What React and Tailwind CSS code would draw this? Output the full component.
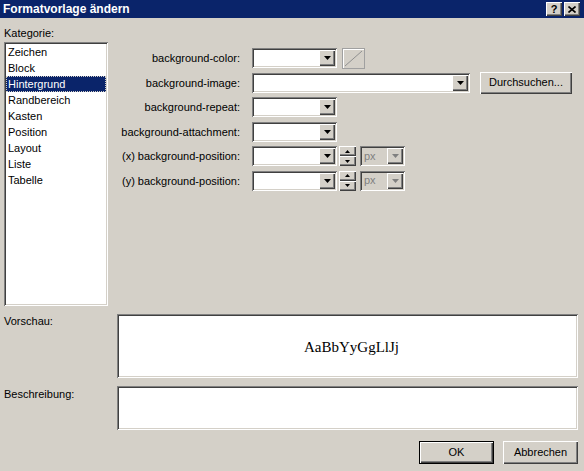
import React from 'react';

const sunken = 'shadow-[inset_1px_1px_0_#808080,inset_-1px_-1px_0_#ffffff,inset_2px_2px_0_#404040,inset_-2px_-2px_0_#d4d0c8]';
const raised = 'shadow-[inset_1px_1px_0_#ffffff,inset_-1px_-1px_0_#404040,inset_-2px_-2px_0_#808080]';

const categories = ['Zeichen', 'Block', 'Hintergrund', 'Randbereich', 'Kasten', 'Position', 'Layout', 'Liste', 'Tabelle'];

function Arrow({ disabled }) {
  return (
    <svg width="7" height="4" viewBox="0 0 7 4">
      <path d="M0 0h7L3.5 4z" fill={disabled ? '#808080' : '#000'} />
    </svg>
  );
}

function Combo({ width, disabled, text }) {
  return (
    <div className={`h-[20px] flex p-[2px] ${width} ${disabled ? 'bg-[#d4d0c8]' : 'bg-white'} ${sunken}`}>
      <div className="flex-1 flex items-center pl-[2px] text-[#808080]">{text}</div>
      <div className={`w-[16px] flex items-center justify-center bg-[#d4d0c8] ${raised}`}>
        <Arrow disabled={disabled} />
      </div>
    </div>
  );
}

function Spin() {
  return (
    <div className="ml-[2px] w-[17px] h-[20px] flex flex-col">
      <div className={`h-[10px] flex items-center justify-center bg-[#d4d0c8] ${raised}`}>
        <svg width="5" height="3" viewBox="0 0 5 3"><path d="M2.5 0L5 3H0z" fill="#000" /></svg>
      </div>
      <div className={`h-[10px] flex items-center justify-center bg-[#d4d0c8] ${raised}`}>
        <svg width="5" height="3" viewBox="0 0 5 3"><path d="M0 0h5L2.5 3z" fill="#000" /></svg>
      </div>
    </div>
  );
}

function Row({ label, children }) {
  return (
    <div className="h-[20px] flex items-center">
      <div className="w-[133px] text-right pr-[1px] pt-[1px] whitespace-nowrap">{label}</div>
      <div className="ml-[11px] flex items-center">{children}</div>
    </div>
  );
}

export default function App() {
  return (
    <div className="w-[584px] h-[471px] bg-[#d4d0c8] font-['Liberation_Sans',Arial,sans-serif] text-[11px] leading-[13px] text-black flex flex-col overflow-hidden">
      {/* Title bar */}
      <div className="h-[18px] bg-[#0a246a] flex items-center justify-between pl-[3px] pr-[4px]">
        <span className="text-white font-bold text-[12px]">Formatvorlage ändern</span>
        <div className="flex gap-[2px]">
          <div className={`w-[16px] h-[14px] bg-[#d4d0c8] flex items-center justify-center font-bold text-[11px] ${raised}`}>?</div>
          <div className={`w-[16px] h-[14px] bg-[#d4d0c8] flex items-center justify-center ${raised}`}>
            <svg width="8" height="7" viewBox="0 0 8 7">
              <path d="M0.5 0.5L7.5 6.5M7.5 0.5L0.5 6.5" stroke="#000" strokeWidth="1.6" />
            </svg>
          </div>
        </div>
      </div>

      <div className="flex-1 flex flex-col pt-[9px] pl-[4px] pr-[6px]">
        {/* Top section */}
        <div className="flex">
          <div className="flex flex-col w-[104px]">
            <div>Kategorie:</div>
            <div className={`mt-[2px] h-[264px] bg-white p-[2px] ${sunken}`}>
              {categories.map((c) => (
                <div
                  key={c}
                  className={`h-[16px] flex items-center pl-[2px] ${c === 'Hintergrund' ? 'bg-[#0a246a] text-white outline-1 outline-dotted outline-[#d4d0c8] -outline-offset-1' : ''}`}
                >
                  {c}
                </div>
              ))}
            </div>
          </div>

          <div className="flex flex-col gap-[4.6px] pt-[21px]">
            <Row label="background-color:">
              <Combo width="w-[85px]" />
              <div className="ml-[5px] w-[23px] h-[21px] border border-[#a0a0a0] bg-[#d4d0c8] shadow-[inset_1px_1px_0_#ffffff]">
                <svg width="21" height="19" viewBox="0 0 21 19">
                  <path d="M2 17L19 2" stroke="#909090" strokeWidth="1" />
                </svg>
              </div>
            </Row>
            <Row label="background-image:">
              <Combo width="w-[218px]" />
              <div className={`ml-[10px] -my-[1px] w-[92px] h-[22px] flex items-center justify-center bg-[#d4d0c8] ${raised}`}>
                Durchsuchen...
              </div>
            </Row>
            <Row label="background-repeat:">
              <Combo width="w-[85px]" />
            </Row>
            <Row label="background-attachment:">
              <Combo width="w-[85px]" />
            </Row>
            <Row label="(x) background-position:">
              <Combo width="w-[85px]" />
              <Spin />
              <div className="ml-[4px]"><Combo width="w-[45px]" disabled text="px" /></div>
            </Row>
            <Row label="(y) background-position:">
              <Combo width="w-[85px]" />
              <Spin />
              <div className="ml-[4px]"><Combo width="w-[45px]" disabled text="px" /></div>
            </Row>
          </div>
        </div>

        {/* Preview */}
        <div className="flex mt-[8px]">
          <div className="w-[113px] pt-[1px]">Vorschau:</div>
          <div className={`flex-1 h-[64px] bg-white flex items-center justify-center ${sunken}`}>
            <span className="font-['Liberation_Serif','Times_New_Roman',serif] text-[15px] leading-[18px] pt-[2px] pl-[8px]">AaBbYyGgLlJj</span>
          </div>
        </div>

        {/* Description */}
        <div className="flex mt-[8px]">
          <div className="w-[113px] pt-[2px]">Beschreibung:</div>
          <div className={`flex-1 h-[44px] bg-white ${sunken}`} />
        </div>

        {/* Buttons */}
        <div className="flex justify-end gap-[9px] mt-[11px]">
          <div className="w-[75px] h-[23px] border border-black flex">
            <div className={`flex-1 flex items-center justify-center bg-[#d4d0c8] ${raised}`}>OK</div>
          </div>
          <div className={`w-[75px] h-[23px] flex items-center justify-center bg-[#d4d0c8] ${raised}`}>Abbrechen</div>
        </div>
      </div>
    </div>
  );
}
